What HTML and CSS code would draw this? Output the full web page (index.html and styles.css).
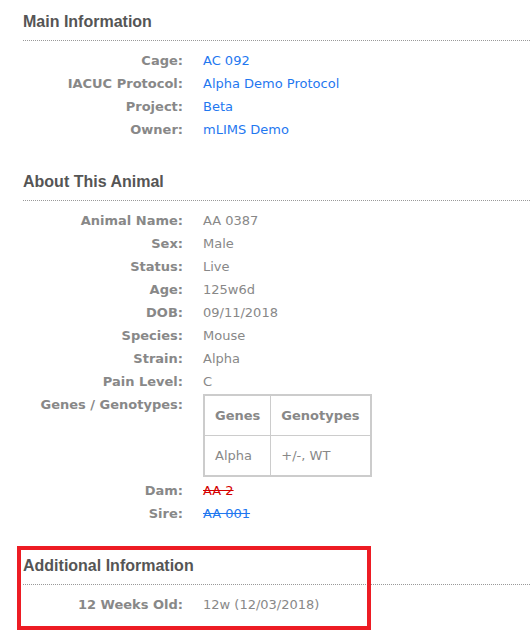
FILE: index.html
```html
<!DOCTYPE html>
<html lang="en">
<head>
  <meta charset="UTF-8">
  <meta name="viewport" content="width=device-width, initial-scale=1.0">
  <title>Animal Details</title>
  <link rel="stylesheet" href="styles.css">
</head>
<body>
  <div class="page">
    <section class="panel">
      <h2 class="panel-title">Main Information</h2>
      <dl class="fields">
        <dt>Cage:</dt><dd><a href="#">AC 092</a></dd>
        <dt>IACUC Protocol:</dt><dd><a href="#">Alpha Demo Protocol</a></dd>
        <dt>Project:</dt><dd><a href="#">Beta</a></dd>
        <dt>Owner:</dt><dd><a href="#">mLIMS Demo</a></dd>
      </dl>
    </section>

    <section class="panel">
      <h2 class="panel-title">About This Animal</h2>
      <dl class="fields">
        <dt>Animal Name:</dt><dd>AA 0387</dd>
        <dt>Sex:</dt><dd>Male</dd>
        <dt>Status:</dt><dd>Live</dd>
        <dt>Age:</dt><dd>125w6d</dd>
        <dt>DOB:</dt><dd>09/11/2018</dd>
        <dt>Species:</dt><dd>Mouse</dd>
        <dt>Strain:</dt><dd>Alpha</dd>
        <dt>Pain Level:</dt><dd>C</dd>
        <dt>Genes / Genotypes:</dt>
        <dd>
          <table class="genes">
            <thead>
              <tr><th>Genes</th><th>Genotypes</th></tr>
            </thead>
            <tbody>
              <tr><td>Alpha</td><td>+/-, WT</td></tr>
            </tbody>
          </table>
        </dd>
        <dt>Dam:</dt><dd><a href="#" class="dead female">AA 2</a></dd>
        <dt>Sire:</dt><dd><a href="#" class="dead">AA 001</a></dd>
      </dl>
    </section>

    <section class="panel">
      <h2 class="panel-title">Additional Information</h2>
      <dl class="fields">
        <dt>12 Weeks Old:</dt><dd>12w (12/03/2018)</dd>
      </dl>
    </section>

    <div class="highlight"></div>
  </div>
</body>
</html>
```

FILE: styles.css
```css
body {
  margin: 0;
  background: #fff;
  font-family: Verdana, "DejaVu Sans", sans-serif;
  font-size: 13px;
  color: #888;
}
.page {
  position: relative;
  padding: 12px 0 0 23px;
}
.panel {
  margin-bottom: 31px;
}
.panel-title {
  margin: 0;
  padding-bottom: 8px;
  border-bottom: 1px dotted #999;
  font-family: "Liberation Sans", Arial, sans-serif;
  font-size: 16px;
  line-height: 20px;
  font-weight: bold;
  color: #555;
}
.fields {
  display: grid;
  grid-template-columns: 160px 1fr;
  column-gap: 20px;
  margin: 0;
  padding-top: 8px;
}
.fields dt {
  text-align: right;
  font-weight: bold;
  line-height: 23px;
}
.fields dd {
  margin: 0;
  line-height: 23px;
}
a {
  color: #1f78f0;
  text-decoration: none;
}
a.dead {
  text-decoration: line-through;
}
a.female {
  color: #d40000;
}
.genes {
  border-collapse: collapse;
  border: 2px solid #ccc;
  margin: 1px 0 2px;
}
.genes th, .genes td {
  border: 1px solid #ccc;
  padding: 10px 10px 9px;
  line-height: 20px;
  text-align: left;
}
.genes th {
  font-weight: bold;
}
.highlight {
  position: absolute;
  left: 17px;
  top: 546px;
  width: 346px;
  height: 76px;
  border: 4px solid #ed1c24;
}
```
